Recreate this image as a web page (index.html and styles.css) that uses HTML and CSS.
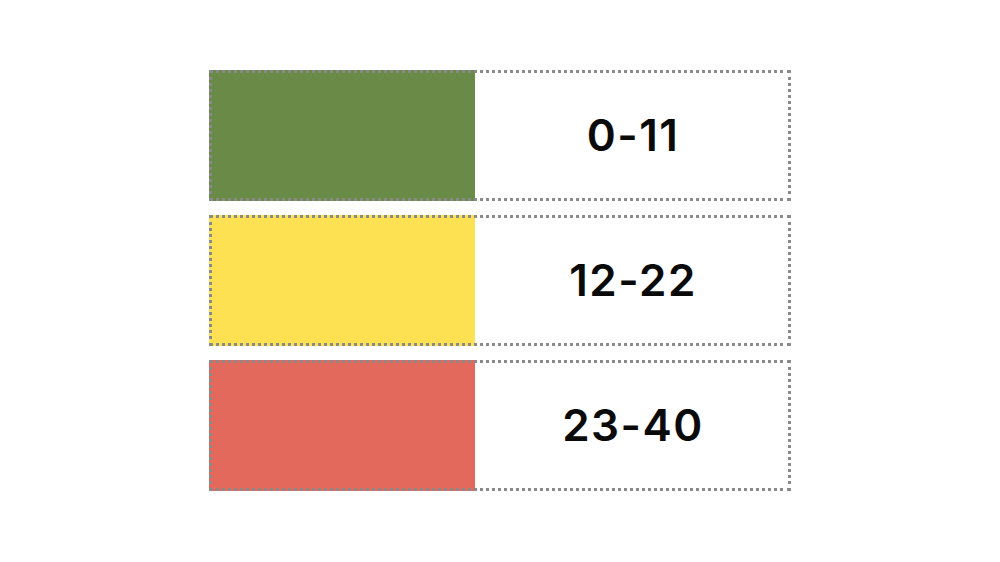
FILE: index.html
```html
<!DOCTYPE html>
<html>
<head>
<meta charset="utf-8">
<link rel="stylesheet" href="styles.css">
</head>
<body>
<div class="legend">
  <div class="row">
    <div class="swatch green"></div>
    <div class="label">0-11</div>
  </div>
  <div class="row">
    <div class="swatch yellow"></div>
    <div class="label">12-22</div>
  </div>
  <div class="row">
    <div class="swatch red"></div>
    <div class="label">23-40</div>
  </div>
</div>
</body>
</html>
```
FILE: styles.css
```css
html, body {
  margin: 0;
  padding: 0;
  background: #ffffff;
}
body {
  width: 1000px;
  height: 562px;
  overflow: hidden;
  font-family: Inter, "Liberation Sans", sans-serif;
}
.legend {
  width: 582px;
  margin: 70px auto 0;
  display: flex;
  flex-direction: column;
  gap: 14px;
}
.row {
  position: relative;
  height: 131px;
  display: flex;
}
.row::after {
  content: "";
  position: absolute;
  inset: 0;
  border: 3px dotted #8a8a8a;
  pointer-events: none;
}
.swatch {
  width: 266px;
  flex: none;
}
.green { background: #6a8a48; }
.yellow { background: #fde152; }
.red { background: #e4695d; }
.label {
  flex: 1;
  display: flex;
  align-items: center;
  justify-content: center;
  padding-bottom: 2px;
  font-size: 44px;
  font-weight: 600;
  letter-spacing: 1.5px;
  color: #0a0a0a;
}
```
